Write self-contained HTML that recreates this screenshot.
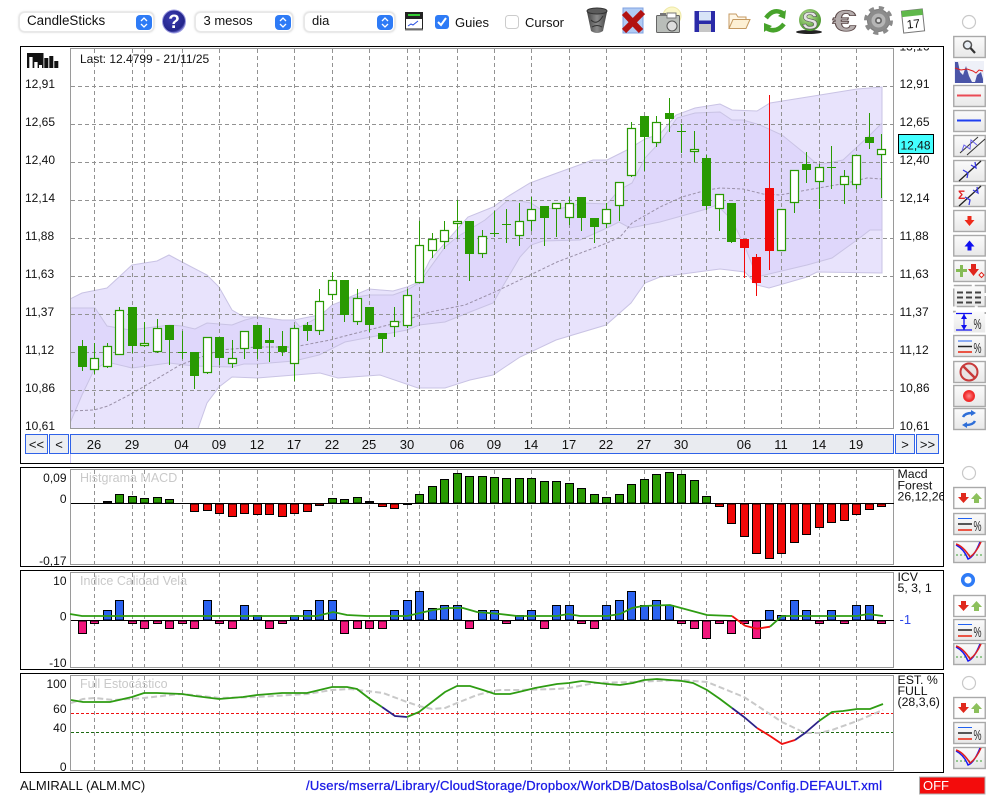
<!DOCTYPE html>
<html><head><meta charset="utf-8"><title>CandleSticks</title>
<style>
html,body{margin:0;padding:0;background:#fff;width:1000px;height:800px;overflow:hidden}
svg{display:block;position:absolute;left:0;top:0}
text{font-family:"Liberation Sans",sans-serif;font-size:12px;fill:#111}
.d{font-size:13px;text-anchor:middle}
.r{text-anchor:end}
.t{font-size:12.5px;fill:#c9c9c9}
.s{font-size:13px}
.sel{fill:#fff;stroke:#e8e8e8;stroke-width:1;filter:drop-shadow(0 .5px 1px rgba(0,0,0,.25))}
.bb{fill:url(#bg);stroke:#a9a9a9;stroke-width:1.4}
.gl{stroke:#929292;stroke-width:1;stroke-dasharray:4 3;fill:none}
.ar{fill:none;stroke:#fff;stroke-width:1.3}
</style></head><body>
<svg width="1000" height="800" viewBox="0 0 1000 800" xmlns="http://www.w3.org/2000/svg">
<defs>
<linearGradient id="bg" x1="0" y1="0" x2="0" y2="1"><stop offset="0" stop-color="#fbfbfb"/><stop offset="1" stop-color="#e8e8e8"/></linearGradient>
<linearGradient id="tr" x1="0" y1="0" x2="1" y2="0"><stop offset="0" stop-color="#444"/><stop offset=".5" stop-color="#8a8a8a"/><stop offset="1" stop-color="#444"/></linearGradient>
<radialGradient id="hp" cx=".4" cy=".35" r=".7"><stop offset="0" stop-color="#3b3bb0"/><stop offset=".8" stop-color="#23258a"/><stop offset="1" stop-color="#8f8fe8"/></radialGradient>
<radialGradient id="ball" cx=".4" cy=".35" r=".7"><stop offset="0" stop-color="#c4e8a0"/><stop offset="1" stop-color="#3f8f22"/></radialGradient>
<radialGradient id="rec" cx=".5" cy=".5" r=".5"><stop offset="0" stop-color="#ff8a8a"/><stop offset="1" stop-color="#ee1c1c"/></radialGradient>
<clipPath id="pl"><rect x="70.5" y="48.5" width="823" height="380"/></clipPath>
<clipPath id="tl"><rect x="895" y="48" width="45" height="20"/></clipPath>
<clipPath id="rp"><rect x="895" y="467" width="48.5" height="40"/></clipPath>
</defs>

<!-- toolbar -->
<rect class="sel" x="19.5" y="12.5" width="134" height="19" rx="5"/>
<rect x="136" y="15" width="16" height="15" rx="4" fill="#2e7bf6"/>
<path class="ar" d="M141 21l3-3 3 3M141 24l3 3 3-3"/>
<text x="27" y="25" style="font-size:13.4px">CandleSticks</text>
<circle cx="174" cy="21.5" r="11.5" fill="url(#hp)" stroke="#9a9ae0"/>
<text x="174" y="28" text-anchor="middle" style="font-size:19px;font-weight:bold;fill:#fff">?</text>
<rect class="sel" x="195.5" y="12.5" width="97" height="19" rx="5"/>
<rect x="275" y="15" width="16" height="15" rx="4" fill="#2e7bf6"/>
<path class="ar" d="M280 21l3-3 3 3M280 24l3 3 3-3"/>
<text class="s" x="203.500" y="25">3 mesos</text>
<rect class="sel" x="304.500" y="12.5" width="90" height="19" rx="5"/>
<rect x="377" y="15" width="16" height="15" rx="4" fill="#2e7bf6"/>
<path class="ar" d="M382 21l3-3 3 3M382 24l3 3 3-3"/>
<text class="s" x="312" y="25">dia</text>
<!-- terminal icon -->
<rect x="405" y="12" width="18" height="6" fill="#222"/>
<rect x="408" y="14" width="12" height="2" fill="#3c3"/>
<rect x="405.500" y="18.500" width="17" height="10.500" fill="#fff" stroke="#222"/>
<path d="M408 26l3-2 2 1 5-4" fill="none" stroke="#2a50e0"/>
<rect x="405" y="29.500" width="18" height="1.500" fill="#bbb"/>
<rect x="435" y="15" width="14" height="14" rx="3" fill="#2e7bf6"/>
<path d="M438 22l3 3 5-7" fill="none" stroke="#fff" stroke-width="2"/>
<text class="s" x="455" y="27">Guies</text>
<rect x="505.500" y="15.500" width="13" height="13" rx="3" fill="#fff" stroke="#ccc"/>
<text class="s" x="525" y="27">Cursor</text>

<!-- trash -->
<path d="M587 12Q597 5 607 12L603 31Q597 35 591 31Z" fill="url(#tr)"/>
<ellipse cx="597" cy="11" rx="10" ry="3" fill="#5c5c5c" stroke="#333"/>
<path d="M591 20q6 6 12-4M592 27q5-3 10 0" stroke="#333" fill="none"/>
<!-- X -->
<rect x="623" y="8" width="20" height="25" fill="#b0cbf5" stroke="#7fa0e0"/>
<path d="M624 13L641 31M643 12L624 31" stroke="#b21212" stroke-width="6" fill="none"/>
<!-- camera -->
<circle cx="672" cy="16" r="9" fill="#fbf7c8" stroke="#eee8a8"/>
<rect x="656.500" y="15.500" width="23" height="17" fill="#b9bdb9" stroke="#666" rx="1"/>
<rect x="660" y="13" width="6" height="3" fill="#777"/>
<rect x="667" y="13" width="9" height="5" fill="#fff" stroke="#777"/>
<circle cx="672" cy="26" r="5" fill="#ddd" stroke="#555"/>
<!-- floppy -->
<path d="M694.500 11H715V32H694.500Z" fill="#2a2aa8"/>
<rect x="699" y="11.500" width="12" height="9" fill="#d8e4f8"/>
<rect x="699" y="24" width="12" height="8" fill="#c6c6c6"/>
<!-- folder -->
<path d="M729 28V14h7l2 3h8v3" fill="#fff7e6" stroke="#c59a62"/>
<path d="M729 28.500l4-9h17l-4 9Z" fill="#fdf0d4" stroke="#c59a62"/>
<!-- refresh -->
<path d="M766 18q8-11 18-4M784 24q-8 10-18 4" fill="none" stroke="#47a32b" stroke-width="4.500"/>
<path d="M786 10l-1 9-7-3ZM764 32l0-9 8 3Z" fill="#47a32b"/>
<!-- S ball -->
<ellipse cx="809" cy="32" rx="13" ry="2" fill="#222"/>
<circle cx="810" cy="20" r="11" fill="url(#ball)"/>
<text x="810" y="29" text-anchor="middle" style="font-size:24px;font-weight:bold;fill:#e4e4e4;stroke:#555;stroke-width:.6">S</text>
<!-- euro -->
<text transform="translate(844.500 31) scale(1.45 1)" text-anchor="middle" style="font-size:30px;font-weight:bold;fill:#b5adad;stroke:#5c4a4a;stroke-width:.8">€</text>
<!-- gear -->
<circle cx="878.500" cy="20.500" r="11" fill="#8c8c8c" stroke="#777"/>
<circle cx="878.500" cy="20.500" r="12.500" fill="none" stroke="#8a8a8a" stroke-width="4" stroke-dasharray="5 4.800"/>
<circle cx="878.500" cy="20.500" r="7" fill="#b5b5b5"/>
<circle cx="878.500" cy="20.500" r="3.500" fill="#666"/>
<circle cx="878.500" cy="20.500" r="1.800" fill="#ddd"/>
<!-- calendar -->
<g transform="rotate(-6 913 21)">
<rect x="902.500" y="10" width="21" height="22" fill="#fff" stroke="#777"/>
<rect x="902.500" y="10" width="21" height="6" fill="#5fb84a"/>
<text x="913" y="28" text-anchor="middle" style="font-size:12px">17</text>
</g>
<circle cx="969" cy="22" r="6.500" fill="#fff" stroke="#c9c9c9" stroke-width="1.200"/>

<!-- main panel -->
<rect x="20.500" y="46.500" width="923" height="417" fill="#fff" stroke="#000"/>
<g clip-path="url(#pl)">
<polygon fill="#e8e3fc" stroke="#c9c3e4" points="70,299 82,293 107,288 119,277 132,265 157,261 169,255 182,262 207,275 219,287 232,310 244,317 257,317 282,320 294,320 319,315 332,307 350,297 369,289 393,291 407,287 419,282 430,260 468,217 493,207 507,197 530,183 557,173 593,160 607,160 627,150 645,139 660,134 676,115 695,108 720,104 732,110 757,111 770,103 820,95 857,89 882,87 882,273 817,272 807,277 769,288 757,285 745,272 720,269 660,277 645,283 631,303 606,325 556,340 520,357 493,375 470,380 445,388 418,388 380,375 338,378 320,373 257,378 232,377 219,387 207,403 194,440 70,440"/>
<polygon fill="#dfd7fb" stroke="#c9c3e4" points="70,308 95,308 107,326 130,330 170,325 182,326 195,329 207,323 232,325 245,320 257,317 282,320 294,320 300,327 319,317 332,305 350,298 369,295 393,295 407,290 419,283 445,247 457,237 485,220 507,201 520,201 531,203 540,209 563,208 583,203 607,204 619,190 632,183 645,158 660,142 677,118 695,113 720,112 732,120 743,120 760,125 782,135 803,152 818,165 843,160 857,147 870,135 882,123 882,230 870,230 857,240 832,258 807,265 769,274 757,277 745,247 732,220 717,205 703,210 660,222 630,228 619,222 607,228 580,240 543,241 531,245 520,257 493,303 470,312 445,322 419,325 407,330 345,342 319,355 294,361 257,364 244,364 232,367 194,366 169,363 132,368 107,362 94,370 82,395 70,423"/>
<polyline fill="none" stroke="#9a90a8" stroke-dasharray="3 2" points="70,411 94,410 108,406 133,393 180,365 220,350 257,347 294,347 330,340 345,336 400,322 430,312 465,305 497,291 557,262 607,243 620,237 632,223 660,207 682,197 707,190 720,188 743,189 763,194 780,195 807,190 847,183 867,178 882,179"/>
</g>
<path class="gl" d="M71 86.500H893M71 124.500H893M71 162.500H893M71 200.500H893M71 238.500H893M71 276.500H893M71 314.500H893M71 352.500H893M71 390.500H893"/>
<path class="gl" d="M94.500 49V428M132.500 49V428M144.500 49V428M182.500 49V428M219.500 49V428M257.500 49V428M294.500 49V428M332.500 49V428M369.500 49V428M407.500 49V428M419.500 49V428M457.500 49V428M494.500 49V428M531.500 49V428M569.500 49V428M606.500 49V428M644.500 49V428M681.500 49V428M706.500 49V428M744.500 49V428M781.500 49V428M819.500 49V428M856.500 49V428"/>
<rect x="70.500" y="48.500" width="823" height="380" fill="none" stroke="#9a9a9a"/>

<!-- wicks -->
<path shape-rendering="crispEdges" fill="none" stroke="#299a02" d="M82.500 340V371M94.500 343V374M107.500 343V368M119.500 307V355M132.500 307V353M144.500 322V347M157.500 319V353M169.500 325V365M182.500 331V359M194.500 352V389M207.500 337V374M219.500 337V365M232.500 340V368M244.500 331V359M257.500 325V359M269.500 328V362M282.500 331V356M294.500 325V381M307.500 322V341M319.500 289V335M332.500 272V300M344.500 280V322M357.500 289V325M369.500 307V332M382.500 333V352M394.500 307V337M407.500 289V328M419.500 221V282M432.500 233V258M444.500 221V249M457.500 200V239M469.500 221V281M482.500 230V258M494.500 211V237M506.500 209V243M519.500 203V246M531.500 197V231M544.500 206V246M556.500 203V237M569.500 197V225M581.500 197V231M594.500 218V243M606.500 203V228M619.500 182V221M631.500 122V177M644.500 116V171M656.500 116V147M669.500 98V132M681.500 124V153M694.500 131V162M706.500 155V210M719.500 194V231M731.500 203V243M781.500 209V251M794.500 170V213M806.500 152V183M819.500 164V209M831.500 146V189M844.500 170V204M856.500 155V189M869.500 113V149M881.500 134V198M178 352.500H187M490 233.500H499M502 224.500H511M677 131.500H686M827 167.500H836"/>
<path shape-rendering="crispEdges" fill="none" stroke="#f10808" d="M744.500 239V278M756.500 254V296M769.500 95V270"/>
<!-- filled bodies -->
<path shape-rendering="crispEdges" fill="#299a02" d="M78 346h9v21h-9zM128 307h9v39h-9zM165 325h9v15h-9zM190 352h9v24h-9zM215 337h9v21h-9zM253 325h9v24h-9zM265 340h9v3h-9zM278 346h9v6h-9zM303 325h9v6h-9zM340 280h9v35h-9zM365 307h9v18h-9zM378 333h9v6h-9zM465 221h9v33h-9zM540 206h9v12h-9zM577 197h9v21h-9zM590 218h9v9h-9zM640 116h9v21h-9zM665 113h9v6h-9zM702 158h9v48h-9zM727 203h9v39h-9zM802 164h9v6h-9zM865 137h9v6h-9z"/>
<path shape-rendering="crispEdges" fill="#f10808" d="M740 239h9v9h-9zM752 257h9v26h-9zM765 188h9v63h-9z"/>
<!-- hollow bodies -->
<path fill="#fff" stroke="#299a02" stroke-width="1.200" d="M90.500 358.500h8v11h-8zM103.500 346.500h8v20h-8zM115.500 310.500h8v44h-8zM140.500 343.500h8v2h-8zM153.500 328.500h8v23h-8zM203.500 337.500h8v35h-8zM228.500 358.500h8v5h-8zM240.500 331.500h8v17h-8zM290.500 328.500h8v35h-8zM315.500 301.500h8v29h-8zM328.500 280.500h8v14h-8zM353.500 298.500h8v23h-8zM390.500 321.500h8v5h-8zM403.500 295.500h8v30h-8zM415.500 245.500h8v37h-8zM428.500 239.500h8v11h-8zM440.500 230.500h8v11h-8zM453.500 221.500h8v2h-8zM478.500 236.500h8v17h-8zM515.500 221.500h8v14h-8zM527.500 209.500h8v11h-8zM552.500 203.500h8v5h-8zM565.500 203.500h8v14h-8zM602.500 209.500h8v14h-8zM615.500 182.500h8v23h-8zM627.500 128.500h8v47h-8zM652.500 122.500h8v20h-8zM690.500 149.500h8v2h-8zM715.500 194.500h8v14h-8zM777.500 209.500h8v41h-8zM790.500 170.500h8v32h-8zM815.500 167.500h8v14h-8zM840.500 176.500h8v8h-8zM852.500 155.500h8v29h-8zM877.500 149.500h8v5h-8z"/>

<!-- chart-type icon -->
<rect x="27" y="53" width="16.500" height="15" fill="#111"/>
<rect x="29.300" y="57" width="3.300" height="11" fill="#fff"/>
<rect x="34.300" y="62" width="3.300" height="6" fill="#fff"/>
<rect x="39" y="65" width="3" height="3" fill="#fff"/>
<rect x="44.300" y="58" width="4" height="10" fill="#111"/>
<rect x="49.300" y="56" width="4" height="12" fill="#111"/>
<rect x="54.300" y="61" width="4" height="7" fill="#111"/>
<text x="80" y="63">Last: 12.4799 - 21/11/25</text>

<!-- price labels -->
<text x="25" y="88">12,91</text><text x="25" y="126">12,65</text><text x="25" y="164">12,40</text><text x="25" y="202">12,14</text><text x="25" y="240">11,88</text><text x="25" y="278">11,63</text><text x="25" y="316">11,37</text><text x="25" y="354">11,12</text><text x="25" y="392">10,86</text><text x="25" y="430">10,61</text>
<g clip-path="url(#tl)"><text x="899.500" y="50.500">13,16</text></g>
<text x="899.500" y="88">12,91</text><text x="899.500" y="126">12,65</text><text x="899.500" y="164">12,40</text><text x="899.500" y="202">12,14</text><text x="899.500" y="240">11,88</text><text x="899.500" y="278">11,63</text><text x="899.500" y="316">11,37</text><text x="899.500" y="354">11,12</text><text x="899.500" y="392">10,86</text><text x="899.500" y="430">10,61</text>
<rect x="898.500" y="134.500" width="35" height="19" fill="#43ffff" stroke="#000"/>
<text x="900.500" y="149.500">12,48</text>

<!-- nav bar -->
<path d="M70.500 453V463" stroke="#c9c2ef"/>
<g fill="#eceef2" stroke="#2f62e8" stroke-width="1">
<rect x="25.500" y="434.500" width="22" height="19"/>
<rect x="49.500" y="434.500" width="19" height="19"/>
<rect x="70.500" y="434.500" width="823" height="19" fill="#e9ebf0"/>
<rect x="895.500" y="434.500" width="19" height="19"/>
<rect x="916.500" y="434.500" width="22" height="19"/>
</g>
<text x="36.500" y="449" class="d">&lt;&lt;</text><text x="59" y="449" class="d">&lt;</text><text x="905" y="449" class="d">&gt;</text><text x="927.500" y="449" class="d">&gt;&gt;</text>
<text class="d" x="94" y="449">26</text><text class="d" x="132" y="449">29</text><text class="d" x="181.500" y="449">04</text><text class="d" x="219" y="449">09</text><text class="d" x="257" y="449">12</text><text class="d" x="294" y="449">17</text><text class="d" x="332" y="449">22</text><text class="d" x="369" y="449">25</text><text class="d" x="407" y="449">30</text><text class="d" x="457" y="449">06</text><text class="d" x="494" y="449">09</text><text class="d" x="531" y="449">14</text><text class="d" x="569" y="449">17</text><text class="d" x="606" y="449">22</text><text class="d" x="644" y="449">27</text><text class="d" x="681" y="449">30</text><text class="d" x="744" y="449">06</text><text class="d" x="781" y="449">11</text><text class="d" x="819" y="449">14</text><text class="d" x="856" y="449">19</text>

<!-- MACD panel -->
<rect x="20.500" y="467.500" width="923" height="99" fill="#fff" stroke="#000"/>
<path class="gl" d="M94.500 470V564M132.500 470V564M144.500 470V564M182.500 470V564M219.500 470V564M257.500 470V564M294.500 470V564M332.500 470V564M369.500 470V564M407.500 470V564M419.500 470V564M457.500 470V564M494.500 470V564M531.500 470V564M569.500 470V564M606.500 470V564M644.500 470V564M681.500 470V564M706.500 470V564M744.500 470V564M781.500 470V564M819.500 470V564M856.500 470V564"/>
<rect x="70.500" y="469.500" width="823" height="95" fill="none" stroke="#9a9a9a"/>
<text class="t" x="80" y="482">Histgrama MACD</text>
<path d="M71 503.500H894" stroke="#000"/>
<path stroke="#000" fill="#299a02" d="M115.500 494.500h8V503h-8zM128.500 496.500h8V503h-8zM140.500 498.500h8V503h-8zM153.500 497.500h8V503h-8zM165.500 499.500h8V503h-8zM328.500 498.500h8V503h-8zM340.500 499.500h8V503h-8zM353.500 497.500h8V503h-8zM415.500 494.500h8V503h-8zM428.500 486.500h8V503h-8zM440.500 479.500h8V503h-8zM453.500 473.500h8V503h-8zM465.500 476.500h8V503h-8zM478.500 476.500h8V503h-8zM490.500 477.500h8V503h-8zM502.500 478.500h8V503h-8zM515.500 478.500h8V503h-8zM527.500 478.500h8V503h-8zM540.500 481.500h8V503h-8zM552.500 481.500h8V503h-8zM565.500 483.500h8V503h-8zM577.500 488.500h8V503h-8zM590.500 494.500h8V503h-8zM602.500 497.500h8V503h-8zM615.500 494.500h8V503h-8zM627.500 484.500h8V503h-8zM640.500 479.500h8V503h-8zM652.500 474.500h8V503h-8zM665.500 472.500h8V503h-8zM677.500 474.500h8V503h-8zM690.500 480.500h8V503h-8zM702.500 496.500h8V503h-8z"/>
<path stroke="#000" fill="#111" d="M103.500 501.500h8V503h-8zM365.500 501.500h8V503h-8zM403.500 504h8v.5h-8z"/>
<path stroke="#000" fill="#f10808" d="M190.500 504h8v7.500h-8zM203.500 504h8v6.500h-8zM215.500 504h8v9.500h-8zM228.500 504h8v12.500h-8zM240.500 504h8v9.500h-8zM253.500 504h8v10.500h-8zM265.500 504h8v10.500h-8zM278.500 504h8v12.500h-8zM290.500 504h8v9.500h-8zM303.500 504h8v7.500h-8zM315.500 504h8v1.500h-8zM378.500 504h8v2.500h-8zM390.500 504h8v4.500h-8zM715.500 504h8v2.500h-8zM727.500 504h8v19.500h-8zM740.500 504h8v32.500h-8zM752.500 504h8v49.500h-8zM765.500 504h8v54.500h-8zM777.500 504h8v49.500h-8zM790.500 504h8v38.500h-8zM802.500 504h8v30.500h-8zM815.500 504h8v23.500h-8zM827.500 504h8v18.500h-8zM840.500 504h8v16.500h-8zM852.500 504h8v10.500h-8zM865.500 504h8v5.500h-8zM877.500 504h8v2.500h-8z"/>
<text class="r" x="66.500" y="482">0,09</text><text class="r" x="66.500" y="503">0</text><text class="r" x="66.500" y="565">-0,17</text>
<g clip-path="url(#rp)"><text x="897.500" y="478" style="font-size:12.3px">Macd</text><text x="897.500" y="489.500" style="font-size:12.3px">Forest</text><text x="897.500" y="500.500" style="font-size:12.3px">26,12,26</text></g>

<!-- ICV panel -->
<rect x="20.500" y="570.500" width="923" height="99" fill="#fff" stroke="#000"/>
<path class="gl" d="M94.500 573V667M132.500 573V667M144.500 573V667M182.500 573V667M219.500 573V667M257.500 573V667M294.500 573V667M332.500 573V667M369.500 573V667M407.500 573V667M419.500 573V667M457.500 573V667M494.500 573V667M531.500 573V667M569.500 573V667M606.500 573V667M644.500 573V667M681.500 573V667M706.500 573V667M744.500 573V667M781.500 573V667M819.500 573V667M856.500 573V667"/>
<rect x="70.500" y="572.500" width="823" height="95" fill="none" stroke="#9a9a9a"/>
<text class="t" x="80" y="585">Indice Calidad Vela</text>
<path d="M71 620.500H894" stroke="#000"/>
<path stroke="#000" fill="#2b62f0" d="M103.500 610.500h8V620h-8zM115.500 600.500h8V620h-8zM203.500 600.500h8V620h-8zM240.500 605.500h8V620h-8zM253.500 615.500h8V620h-8zM290.500 615.500h8V620h-8zM303.500 610.500h8V620h-8zM315.500 600.500h8V620h-8zM328.500 600.500h8V620h-8zM390.500 610.500h8V620h-8zM403.500 600.500h8V620h-8zM415.500 591.500h8V620h-8zM428.500 608.500h8V620h-8zM440.500 605.500h8V620h-8zM453.500 605.500h8V620h-8zM478.500 610.500h8V620h-8zM490.500 610.500h8V620h-8zM515.500 615.500h8V620h-8zM527.500 610.500h8V620h-8zM552.500 605.500h8V620h-8zM565.500 605.500h8V620h-8zM602.500 605.500h8V620h-8zM615.500 600.500h8V620h-8zM627.500 591.500h8V620h-8zM640.500 605.500h8V620h-8zM652.500 600.500h8V620h-8zM665.500 605.500h8V620h-8zM765.500 610.500h8V620h-8zM777.500 615.500h8V620h-8zM790.500 600.500h8V620h-8zM802.500 610.500h8V620h-8zM827.500 610.500h8V620h-8zM852.500 605.500h8V620h-8zM865.500 605.500h8V620h-8z"/>
<path stroke="#000" fill="#f0167c" d="M78.500 621h8v12.500h-8zM90.500 621h8v2.500h-8zM128.500 621h8v2.500h-8zM140.500 621h8v7.500h-8zM153.500 621h8v2.500h-8zM165.500 621h8v7.500h-8zM178.500 621h8v2.500h-8zM190.500 621h8v7.500h-8zM215.500 621h8v2.500h-8zM228.500 621h8v7.500h-8zM265.500 621h8v7.500h-8zM278.500 621h8v2.500h-8zM340.500 621h8v12.500h-8zM353.500 621h8v7.500h-8zM365.500 621h8v7.500h-8zM378.500 621h8v7.500h-8zM465.500 621h8v7.500h-8zM502.500 621h8v2.500h-8zM540.500 621h8v7.500h-8zM577.500 621h8v2.500h-8zM590.500 621h8v7.500h-8zM677.500 621h8v2.500h-8zM690.500 621h8v7.500h-8zM702.500 621h8v17.500h-8zM715.500 621h8v2.500h-8zM727.500 621h8v12.500h-8zM740.500 621h8v2.500h-8zM752.500 621h8v17.500h-8zM815.500 621h8v2.500h-8zM840.500 621h8v2.500h-8zM877.500 621h8v2.500h-8z"/>
<polyline fill="none" stroke="#2e9c12" stroke-width="1.800" points="70,614 82,616 317,616 333,612 347,615 367,616 407,616 433,610 447,608 463,608 477,612 500,614 517,616 557,616 568,614 580,616 607,616 620,614 632,608 643,606 670,605 707,615 732,616"/>
<polyline fill="none" stroke="#f01010" stroke-width="1.800" points="732,616 745,625.700 757,628.700 770,626.700"/>
<polyline fill="none" stroke="#2e9c12" stroke-width="1.800" points="770,626.700 782,616 857,616 868,614 883,616"/>
<text class="r" x="66.500" y="585">10</text><text class="r" x="66.500" y="620.500">0</text><text class="r" x="66.500" y="667">-10</text>
<text x="897.500" y="581" style="font-size:12.3px">ICV</text><text x="897.500" y="592" style="font-size:12.3px">5, 3, 1</text>
<text x="899.500" y="624" style="fill:#2e48e8;font-size:13px">-1</text>

<!-- Stoch panel -->
<rect x="20.500" y="673.500" width="923" height="99" fill="#fff" stroke="#000"/>
<path class="gl" d="M94.500 676V770M132.500 676V770M144.500 676V770M182.500 676V770M219.500 676V770M257.500 676V770M294.500 676V770M332.500 676V770M369.500 676V770M407.500 676V770M419.500 676V770M457.500 676V770M494.500 676V770M531.500 676V770M569.500 676V770M606.500 676V770M644.500 676V770M681.500 676V770M706.500 676V770M744.500 676V770M781.500 676V770M819.500 676V770M856.500 676V770"/>
<rect x="70.500" y="675.500" width="823" height="95" fill="none" stroke="#9a9a9a"/>
<text class="t" x="80" y="688">Full Estocástico</text>
<path d="M71 713.500H893" stroke="#f01010" stroke-dasharray="3 2"/>
<path d="M71 732.500H893" stroke="#1d6a12" stroke-dasharray="3 2"/>
<polyline fill="none" stroke="#c9c9c9" stroke-width="2" stroke-dasharray="6 3" points="71,703 83,699 95,698 113,700 144,698 180,694 193,695 220,698 257,697 307,694 332,690 350,689 383,693 407,702 419,706 432,709 445,708 457,703 477,695 493,691 500,690 517,690 557,689 569,688 595,683 633,682 682,680 707,682 744,697 782,722 805,733 819,733 832,730 857,721 883,710"/>
<polyline fill="none" stroke="#2e9c12" stroke-width="1.800" points="71,700 83,702 110,702 132,697 144,693 157,693 182,694 195,696 219,699 243,697 257,695 282,693 307,693 332,687 347,687 357,689 370,699 382,707"/>
<polyline fill="none" stroke="#2b2288" stroke-width="1.800" points="382,707 395,716 407,717"/>
<polyline fill="none" stroke="#2e9c12" stroke-width="1.800" points="407,717 419,712 432,702 445,692 457,686 470,686 483,690 495,694 510,694 523,691 535,688 557,684 569,683 582,681 607,684 620,685 633,683 644,680 657,679 682,681 693,683 707,690 720,699 732,708"/>
<polyline fill="none" stroke="#2b2288" stroke-width="1.800" points="732,708 744,717 757,728"/>
<polyline fill="none" stroke="#f01010" stroke-width="1.800" points="757,728 770,736 782,744 795,740"/>
<polyline fill="none" stroke="#2b2288" stroke-width="1.800" points="795,740 805,733 819,721"/>
<polyline fill="none" stroke="#2e9c12" stroke-width="1.800" points="819,721 832,712 843,711 857,709 870,709 883,704"/>
<text class="r" x="66.500" y="688">100</text><text class="r" x="66.500" y="713">60</text><text class="r" x="66.500" y="732">40</text><text class="r" x="66.500" y="771">0</text>
<text x="897.500" y="684" style="font-size:12.3px">EST. %</text><text x="897.500" y="695" style="font-size:12.3px">FULL</text><text x="897.500" y="706" style="font-size:12.3px">(28,3,6)</text>

<!-- footer -->
<text class="s" x="20" y="790">ALMIRALL (ALM.MC)</text>
<text class="s" x="306" y="790" textLength="576" style="fill:#1b1be6;stroke:#1b1be6;stroke-width:.3">/Users/mserra/Library/CloudStorage/Dropbox/WorkDB/DatosBolsa/Configs/Config.DEFAULT.xml</text>
<rect x="919.500" y="777" width="65.500" height="17" fill="#f30c0c" stroke="#b0b0b0"/>
<text class="s" x="923" y="790" style="fill:#fff">OFF</text>

<!-- side buttons -->
<rect class="bb" x="953.750" y="36.500" width="31.500" height="21"/>
<circle cx="967.500" cy="45" r="4" fill="#e8eef5" stroke="#555" stroke-width="1.500"/>
<path d="M970.500 48L975 53" stroke="#333" stroke-width="2.200"/>

<rect x="954" y="61" width="30" height="22" fill="#eef0f8"/>
<path d="M955 83V62l3 0 2 10 3 3 3-9 3 10 3 6 3 0 2-7 4-3 2 7v4Z" fill="#4a55a8"/>
<path d="M955 68l6 2 6-1 6 2 3 2 3-3 4 1" fill="none" stroke="#e01f1f"/>

<rect class="bb" x="953.750" y="85.500" width="31.500" height="21"/><path d="M957 95.500H981" stroke="#ea4b55" stroke-width="2"/>
<rect class="bb" x="953.750" y="110.500" width="31.500" height="21"/><path d="M957 120.500H981" stroke="#2040f0" stroke-width="2"/>
<rect class="bb" x="953.750" y="135.500" width="31.500" height="21"/>
<path d="M960 153L978 137M967 155L985 139" stroke="#333" fill="none"/><path d="M962 151l2-6 6 4 1-9 6 5" stroke="#6a62f0" fill="none"/>
<rect class="bb" x="953.750" y="160.500" width="31.500" height="21"/>
<path d="M959 181L981 161" stroke="#222" stroke-width="1.300"/><path d="M963 170l5 3-1 5M971 165l5 3-1-6" stroke="#3a3ae0" stroke-width="1.300" fill="none"/>
<rect class="bb" x="953.750" y="185.500" width="31.500" height="21"/>
<path d="M959 206L981 186" stroke="#222" stroke-width="1.300"/><path d="M965 197l5 3-1 5M973 190l5 3-1-6" stroke="#3a3ae0" stroke-width="1.300" fill="none"/>
<text x="958" y="199" style="font-size:12px;font-weight:bold;fill:#e02525">Σ</text>
<rect class="bb" x="953.750" y="210.500" width="31.500" height="21"/><path d="M967.500 216h4v4h3l-5 6-5-6h3z" fill="#ee2a1a"/>
<rect class="bb" x="953.750" y="235.500" width="31.500" height="20.500"/><path d="M967.500 250.500h4v-4h3l-5-6-5 6h3z" fill="#1010f0"/>
<rect class="bb" x="953.750" y="260.500" width="31.500" height="21"/>
<path d="M960 265h3v4h4v3h-4v5h-3v-5h-4v-3h4z" fill="#85bb55"/><path d="M971 264h5v5h3l-5.500 7-5.500-7h3z" fill="#e0251c"/><path d="M981.500 272.500l2.500 2.500-2.500 2.500-2.500-2.500z" fill="#fff" stroke="#e0251c"/>
<rect class="bb" x="953.750" y="285.500" width="31.500" height="21" stroke-dasharray="18 3"/>
<path d="M957 292.500H981M957 297.500H981M957 302.500H981" stroke="#444" stroke-width="2" stroke-dasharray="6 3"/>
<rect class="bb" x="953.750" y="311.500" width="31.500" height="21" stroke-dasharray="2 30 2 70"/>
<path d="M956 313.500H972M956 330H972M964 314V330" stroke="#1010f0" stroke-width="1.300"/><path d="M964 314l-3 5h6zM964 330l-3-5h6z" fill="#1010f0"/>
<text x="973.500" y="329" textLength="8" lengthAdjust="spacingAndGlyphs" style="font-size:15px;fill:#222">%</text>
<rect class="bb" x="953.750" y="335.500" width="31.500" height="21"/>
<path d="M958 341H972" stroke="#2060f0"/><path d="M958 346.500H972" stroke="#222" stroke-width="1.500"/><path d="M958 352H972" stroke="#ea5545" stroke-width="2"/>
<text x="973.500" y="353" textLength="8" lengthAdjust="spacingAndGlyphs" style="font-size:15px;fill:#222">%</text>
<rect class="bb" x="953.750" y="361.500" width="31.500" height="21"/>
<circle cx="969" cy="372" r="8.500" fill="#e9e3e3" stroke="#c83a3a" stroke-width="2"/><path d="M963 366L975 378" stroke="#c83a3a" stroke-width="2.500"/>
<rect class="bb" x="953.750" y="385.500" width="31.500" height="21"/><circle cx="969" cy="396" r="5.500" fill="url(#rec)" stroke="#f03030"/>
<rect class="bb" x="953.750" y="408.500" width="31.500" height="21"/>
<path d="M963 417q2-4 9-4M975 421q-2 4-9 4" fill="none" stroke="#2f6fd8" stroke-width="2.500"/><path d="M971 410l5 3-5 3zM967 422l-5 3 5 3z" fill="#2f6fd8"/>

<circle cx="969" cy="473" r="6.500" fill="#fff" stroke="#c9c9c9" stroke-width="1.200"/>
<rect class="bb" x="953.750" y="487.500" width="31.500" height="21" style="fill:#fdfdfd"/>
<path d="M961 493h5v4h3l-5.500 6-5.500-6h3z" fill="#e0281c"/><path d="M974 503h5v-4h3l-5.500-6-5.500 6h3z" fill="#8cc05c"/>
<rect class="bb" x="953.750" y="513.500" width="31.500" height="21"/>
<path d="M958 518.500H972" stroke="#2060f0"/><path d="M958 524H972" stroke="#222" stroke-width="1.500"/><path d="M958 530H972" stroke="#ea5545" stroke-width="2"/>
<text x="973.500" y="531" textLength="8" lengthAdjust="spacingAndGlyphs" style="font-size:15px;fill:#222">%</text>
<rect class="bb" x="953.750" y="541.500" width="31.500" height="21"/>
<path d="M956 555H984" stroke="#3aa030" stroke-dasharray="2 2"/><path d="M956 545q8 4 12 14q6-2 12-17" fill="none" stroke="#1a1af0" stroke-width="1.500"/><path d="M956 544q7 2 14 13q6-4 11-15" fill="none" stroke="#e01f1f" stroke-width="1.500"/>

<circle cx="968" cy="580" r="5.300" fill="#fff" stroke="#2e7bf6" stroke-width="3.500"/>
<rect class="bb" x="953.750" y="595.500" width="31.500" height="21" style="fill:#fdfdfd"/>
<path d="M961 601h5v4h3l-5.500 6-5.500-6h3z" fill="#e0281c"/><path d="M974 611h5v-4h3l-5.500-6-5.500 6h3z" fill="#8cc05c"/>
<rect class="bb" x="953.750" y="619.500" width="31.500" height="21"/>
<path d="M958 624.500H972" stroke="#2060f0"/><path d="M958 630H972" stroke="#222" stroke-width="1.500"/><path d="M958 636H972" stroke="#ea5545" stroke-width="2"/>
<text x="973.500" y="637" textLength="8" lengthAdjust="spacingAndGlyphs" style="font-size:15px;fill:#222">%</text>
<rect class="bb" x="953.750" y="643.500" width="31.500" height="21"/>
<path d="M956 657H984" stroke="#3aa030" stroke-dasharray="2 2"/><path d="M956 647q8 4 12 14q6-2 12-17" fill="none" stroke="#1a1af0" stroke-width="1.500"/><path d="M956 646q7 2 14 13q6-4 11-15" fill="none" stroke="#e01f1f" stroke-width="1.500"/>

<circle cx="969" cy="683" r="6.500" fill="#fff" stroke="#c9c9c9" stroke-width="1.200"/>
<rect class="bb" x="953.750" y="697.500" width="31.500" height="21" style="fill:#fdfdfd"/>
<path d="M961 703h5v4h3l-5.500 6-5.500-6h3z" fill="#e0281c"/><path d="M974 713h5v-4h3l-5.500-6-5.500 6h3z" fill="#8cc05c"/>
<rect class="bb" x="953.750" y="722.500" width="31.500" height="21"/>
<path d="M958 727.500H972" stroke="#2060f0"/><path d="M958 733H972" stroke="#222" stroke-width="1.500"/><path d="M958 739H972" stroke="#ea5545" stroke-width="2"/>
<text x="973.500" y="740" textLength="8" lengthAdjust="spacingAndGlyphs" style="font-size:15px;fill:#222">%</text>
<rect class="bb" x="953.750" y="747.500" width="31.500" height="21"/>
<path d="M956 761H984" stroke="#3aa030" stroke-dasharray="2 2"/><path d="M956 751q8 4 12 14q6-2 12-17" fill="none" stroke="#1a1af0" stroke-width="1.500"/><path d="M956 750q7 2 14 13q6-4 11-15" fill="none" stroke="#e01f1f" stroke-width="1.500"/>
</svg>
</body></html>
